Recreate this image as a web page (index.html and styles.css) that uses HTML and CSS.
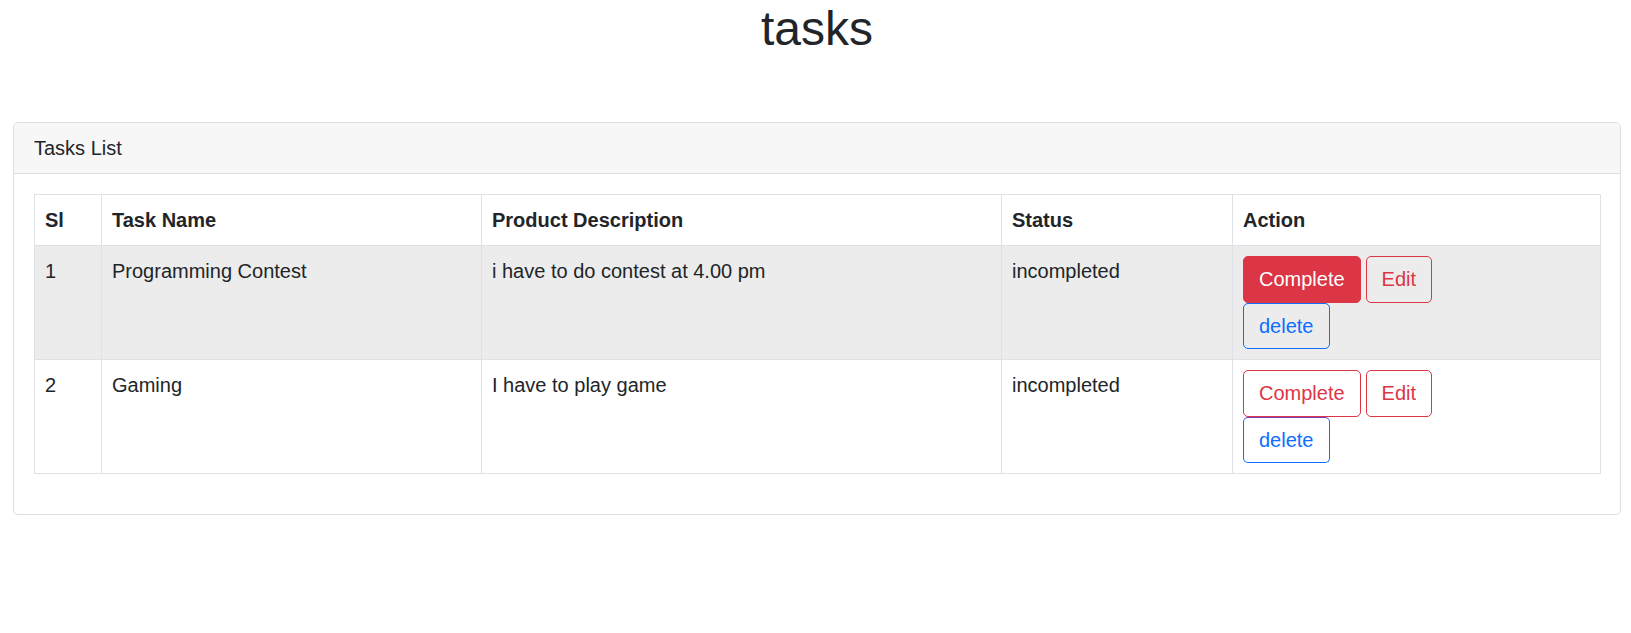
FILE: index.html
```html
<!DOCTYPE html>
<html lang="en">
<head>
<meta charset="utf-8">
<title>tasks</title>
<link rel="stylesheet" href="styles.css">
</head>
<body>
<div class="page">
  <h1 class="title">tasks</h1>
  <div class="card">
    <div class="card-header">Tasks List</div>
    <div class="card-body">
      <table class="table">
        <colgroup>
          <col class="c-sl">
          <col class="c-name">
          <col class="c-desc">
          <col class="c-status">
          <col class="c-action">
        </colgroup>
        <thead>
          <tr>
            <th>Sl</th>
            <th>Task Name</th>
            <th>Product Description</th>
            <th>Status</th>
            <th>Action</th>
          </tr>
        </thead>
        <tbody>
          <tr class="hovered">
            <td>1</td>
            <td>Programming Contest</td>
            <td>i have to do contest at 4.00 pm</td>
            <td>incompleted</td>
            <td>
              <div class="btn-row">
                <a class="btn btn-danger-filled">Complete</a>
                <a class="btn btn-outline-danger">Edit</a>
              </div>
              <form class="btn-form"><button type="button" class="btn btn-outline-primary">delete</button></form>
            </td>
          </tr>
          <tr>
            <td>2</td>
            <td>Gaming</td>
            <td>I have to play game</td>
            <td>incompleted</td>
            <td>
              <div class="btn-row">
                <a class="btn btn-outline-danger">Complete</a>
                <a class="btn btn-outline-danger">Edit</a>
              </div>
              <form class="btn-form"><button type="button" class="btn btn-outline-primary btn-overlap">delete</button></form>
            </td>
          </tr>
        </tbody>
      </table>
    </div>
  </div>
</div>
</body>
</html>
```

FILE: styles.css
```css
* { box-sizing: border-box; }

html, body {
  margin: 0;
  padding: 0;
  background: #fff;
}

body {
  font-family: "Liberation Sans", Arial, sans-serif;
  font-size: 20px;
  line-height: 1.5;
  color: #212529;
}

.page {
  padding: 0 10px 0 13px;
}

.title {
  margin: 0 0 64px;
  font-size: 48px;
  font-weight: 400;
  line-height: 1.2;
  text-align: center;
  color: #212529;
}

.card {
  border: 1px solid #dfdfdf;
  border-radius: 5px;
  background: #fff;
}

.card-header {
  padding: 10px 20px;
  line-height: 30px;
  background: #f7f7f7;
  border-bottom: 1px solid #dfdfdf;
  border-radius: 4px 4px 0 0;
}

.card-body {
  padding: 20px;
}

.table {
  width: 100%;
  border-collapse: collapse;
  table-layout: fixed;
  margin: 0 0 20px;
  border: 1px solid #dee2e6;
}

.c-sl { width: 67px; }
.c-name { width: 380px; }
.c-desc { width: 520px; }
.c-status { width: 231px; }
.c-action { width: 368px; }

.table th,
.table td {
  border: 1px solid #dee2e6;
  padding: 10px;
  line-height: 30px;
  text-align: left;
  vertical-align: top;
}

.table th {
  font-weight: 700;
}

.table tr.hovered td {
  background: #ececec;
}

.btn-row {
  display: flex;
  gap: 5px;
}

.btn-form {
  margin: 0;
}

.btn {
  display: inline-block;
  padding: 7.5px 15px;
  font-family: inherit;
  font-size: 20px;
  line-height: 30px;
  border: 1px solid transparent;
  border-radius: 5px;
  background: transparent;
  cursor: pointer;
  text-decoration: none;
}

.btn-danger-filled {
  color: #fff;
  background: #dc3545;
  border-color: #dc3545;
}

.btn-outline-danger {
  color: #dc3545;
  border-color: #dc3545;
}

.btn-outline-primary {
  color: #0d6efd;
  border-color: #0d6efd;
  padding-top: 7px;
  padding-bottom: 7px;
}

.btn-overlap {
  border-top-color: #6f42c1;
}
```
